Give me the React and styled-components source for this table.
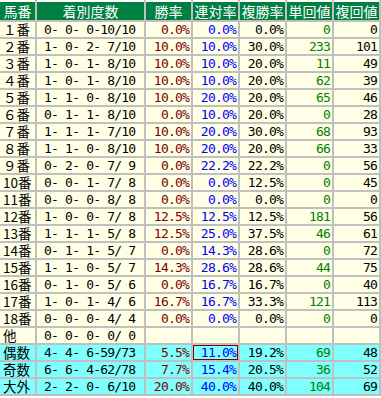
import React from 'react';
import styled, {createGlobalStyle} from 'styled-components';

const Global = createGlobalStyle`
  body {
    margin: 0;
    background: #ffffff;
  }
`;

const Table = styled.div`
  display: grid;
  grid-template-columns: 35px 107px 45px 45px 45px 45px 45px;
  grid-template-rows: 20px;
  grid-auto-rows: 15px;
  column-gap: 2px;
  row-gap: 2px;
  width: 381px;
  padding: 0 2px 2px 0;
  box-sizing: border-box;
  background: #c0c0c0;
`;

const Head = styled.div`
  background: #008040;
  border-top: 2px solid #ffffff;
  color: #ffffff;
  font-family: "Noto Sans CJK JP", sans-serif;
  font-size: 14px;
  line-height: 18px;
  text-align: center;
  white-space: nowrap;
`;

const tones = {
  body: '#ffffe6',
  sum: '#80ffff',
};

const Cell = styled.div`
  background: ${p => tones[p.$tone]};
  color: ${p => p.$color || '#000000'};
  font-family: "DejaVu Sans Mono", "Noto Sans CJK JP", monospace;
  font-size: 13px;
  letter-spacing: -0.8px;
  line-height: 15px;
  text-align: ${p => p.$align || 'right'};
  padding: ${p => p.$pad || '0 2px 0 0'};
  white-space: pre;
  box-shadow: ${p => p.$picked ? 'inset 0 0 0 1px #800000' : 'none'};
`;

const Label = styled(Cell)`
  font-family: "Noto Sans CJK JP", sans-serif;
  font-size: 13.5px;
  letter-spacing: 0;
`;

const heads = ['馬番', '着別度数', '勝率', '連対率', '複勝率', '単回値', '複回値'];

const rows = [
  ['１番', ' 0- 0- 0-10/10', '0.0%', '0.0%', '0.0%', '0', '0'],
  ['２番', ' 1- 0- 2- 7/10', '10.0%', '10.0%', '30.0%', '233', '101'],
  ['３番', ' 1- 0- 1- 8/10', '10.0%', '10.0%', '20.0%', '11', '49'],
  ['４番', ' 1- 0- 1- 8/10', '10.0%', '10.0%', '20.0%', '62', '39'],
  ['５番', ' 1- 1- 0- 8/10', '10.0%', '20.0%', '20.0%', '65', '46'],
  ['６番', ' 0- 1- 1- 8/10', '0.0%', '10.0%', '20.0%', '0', '28'],
  ['７番', ' 1- 1- 1- 7/10', '10.0%', '20.0%', '30.0%', '68', '93'],
  ['８番', ' 1- 1- 0- 8/10', '10.0%', '20.0%', '20.0%', '66', '33'],
  ['９番', ' 0- 2- 0- 7/ 9', '0.0%', '22.2%', '22.2%', '0', '56'],
  ['10番', ' 0- 0- 1- 7/ 8', '0.0%', '0.0%', '12.5%', '0', '45'],
  ['11番', ' 0- 0- 0- 8/ 8', '0.0%', '0.0%', '0.0%', '0', '0'],
  ['12番', ' 1- 0- 0- 7/ 8', '12.5%', '12.5%', '12.5%', '181', '56'],
  ['13番', ' 1- 1- 1- 5/ 8', '12.5%', '25.0%', '37.5%', '46', '61'],
  ['14番', ' 0- 1- 1- 5/ 7', '0.0%', '14.3%', '28.6%', '0', '72'],
  ['15番', ' 1- 1- 0- 5/ 7', '14.3%', '28.6%', '28.6%', '44', '75'],
  ['16番', ' 0- 1- 0- 5/ 6', '0.0%', '16.7%', '16.7%', '0', '40'],
  ['17番', ' 1- 0- 1- 4/ 6', '16.7%', '16.7%', '33.3%', '121', '113'],
  ['18番', ' 0- 0- 0- 4/ 4', '0.0%', '0.0%', '0.0%', '0', '0'],
  ['他', ' 0- 0- 0- 0/ 0', '', '', '', '', ''],
  ['偶数', ' 4- 4- 6-59/73', '5.5%', '11.0%', '19.2%', '69', '48', 'sum'],
  ['奇数', ' 6- 6- 4-62/78', '7.7%', '15.4%', '20.5%', '36', '52', 'sum'],
  ['大外', ' 2- 2- 0- 6/10', '20.0%', '40.0%', '40.0%', '104', '69', 'sum'],
];

const colors = ['#000000', '#000000', '#800000', '#0000ff', '#000000', '#008000', '#000000'];

export default function App() {
  return (
    <>
      <Global />
      <Table>
        {heads.map(h => <Head key={h}>{h}</Head>)}
        {rows.map((r, i) => {
          const tone = r[7] || 'body';
          return r.slice(0, 7).map((v, j) => {
            if (j === 0) {
              return <Label key={i + '-' + j} $tone={tone} $align="left" $pad="0 0 0 3px">{v}</Label>;
            }
            if (j === 1) {
              return <Cell key={i + '-' + j} $tone={tone} $align="left" $pad="0">{v}</Cell>;
            }
            return (
              <Cell key={i + '-' + j} $tone={tone} $color={colors[j]} $picked={r[0] === '偶数' && j === 3}>
                {v}
              </Cell>
            );
          });
        })}
      </Table>
    </>
  );
}
